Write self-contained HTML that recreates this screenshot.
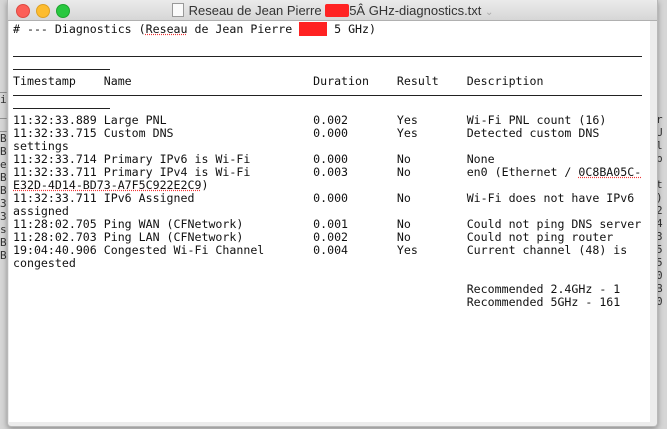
<!DOCTYPE html>
<html><head><meta charset="utf-8"><style>
html,body{margin:0;padding:0;width:667px;height:429px;overflow:hidden;background:#d6d6d6;font-family:"Liberation Sans",sans-serif}
.bgt{position:absolute;font:11px "DejaVu Sans Mono",monospace;color:#333;line-height:13px;white-space:pre}
.win{position:absolute;left:7px;top:0;width:649px;height:426px;background:#ececec;border:1px solid #b8b8b8;border-top:none;border-radius:0 0 4px 4px;box-shadow:0 2px 6px rgba(0,0,0,.35)}
.title{position:absolute;left:0;top:0;width:649px;height:20px;background:linear-gradient(#ebebeb,#d6d6d6);border-bottom:1px solid #b0b0b0;border-radius:5px 5px 0 0}
.dot{position:absolute;top:4px;width:12px;height:12px;border-radius:50%}
.ttl{position:absolute;left:0;right:0;top:3px;text-align:center;font-size:13px;color:#333}
.content{position:absolute;left:1px;top:21px;width:641px;height:401px;background:#fff}
pre{position:absolute;left:4px;top:1px;margin:0;font:11.6px "DejaVu Sans Mono",monospace;line-height:13px;color:#111}
.red{background:#f22;color:#f22}
.sq{text-decoration:underline dotted #e33}
.dl{display:inline-block;height:7px;border-bottom:1px solid #222;vertical-align:top}
</style></head><body>
<div class="bgt" style="left:0;top:80px">_
i
_
_
B
B
e
B
B
3
3
s
B
B</div>
<div class="bgt" style="left:656px;top:100px">
r
U
l
p

t
)
2
4
3
5
5
0
B
0</div>
<div class="win">
<div class="title">
<div class="dot" style="left:8px;background:#fc5f57;border:0.5px solid #de4a42"></div>
<div class="dot" style="left:28px;background:#fdbc2e;border:0.5px solid #dea123"></div>
<div class="dot" style="left:48px;background:#29c840;border:0.5px solid #1fa52f"></div>
<div class="ttl"><span style="display:inline-block;width:10px;height:12px;border:1px solid #999;background:#fafafa;vertical-align:-2px;margin-right:5px"></span>Reseau de Jean Pierre <span style="display:inline-block;width:24px;height:13px;background:#f22;border-radius:2px;vertical-align:-2px"></span>5Â GHz-diagnostics.txt <span style="color:#aaa;font-size:10px">⌄</span></div>
</div>
<div class="content">
<pre style="top:2px"># --- Diagnostics (<span class="sq">Reseau</span> de Jean Pierre <span class="red">xxxx</span> 5 GHz)

<span class="dl" style="width:629px"></span>
<span class="dl" style="width:97px"></span>
Timestamp    Name                          Duration    Result    Description
<span class="dl" style="width:629px"></span>
<span class="dl" style="width:97px"></span>
11:32:33.889 Large PNL                     0.002       Yes       Wi-Fi PNL count (16)
11:32:33.715 Custom DNS                    0.000       Yes       Detected custom DNS
settings
11:32:33.714 Primary IPv6 is Wi-Fi         0.000       No        None
11:32:33.711 Primary IPv4 is Wi-Fi         0.003       No        en0 (Ethernet / <span class="sq">0C8BA05C-</span>
<span class="sq">E32D-4D14-BD73-A7F5C922E2C9</span>)
11:32:33.711 IPv6 Assigned                 0.000       No        Wi-Fi does not have IPv6
assigned
11:28:02.705 Ping WAN (CFNetwork)          0.001       No        Could not ping DNS server
11:28:02.703 Ping LAN (CFNetwork)          0.002       No        Could not ping router
19:04:40.906 Congested Wi-Fi Channel       0.004       Yes       Current channel (48) is
congested

                                                                 Recommended 2.4GHz - 1
                                                                 Recommended 5GHz - 161</pre>
</div>
</div>
</body></html>
